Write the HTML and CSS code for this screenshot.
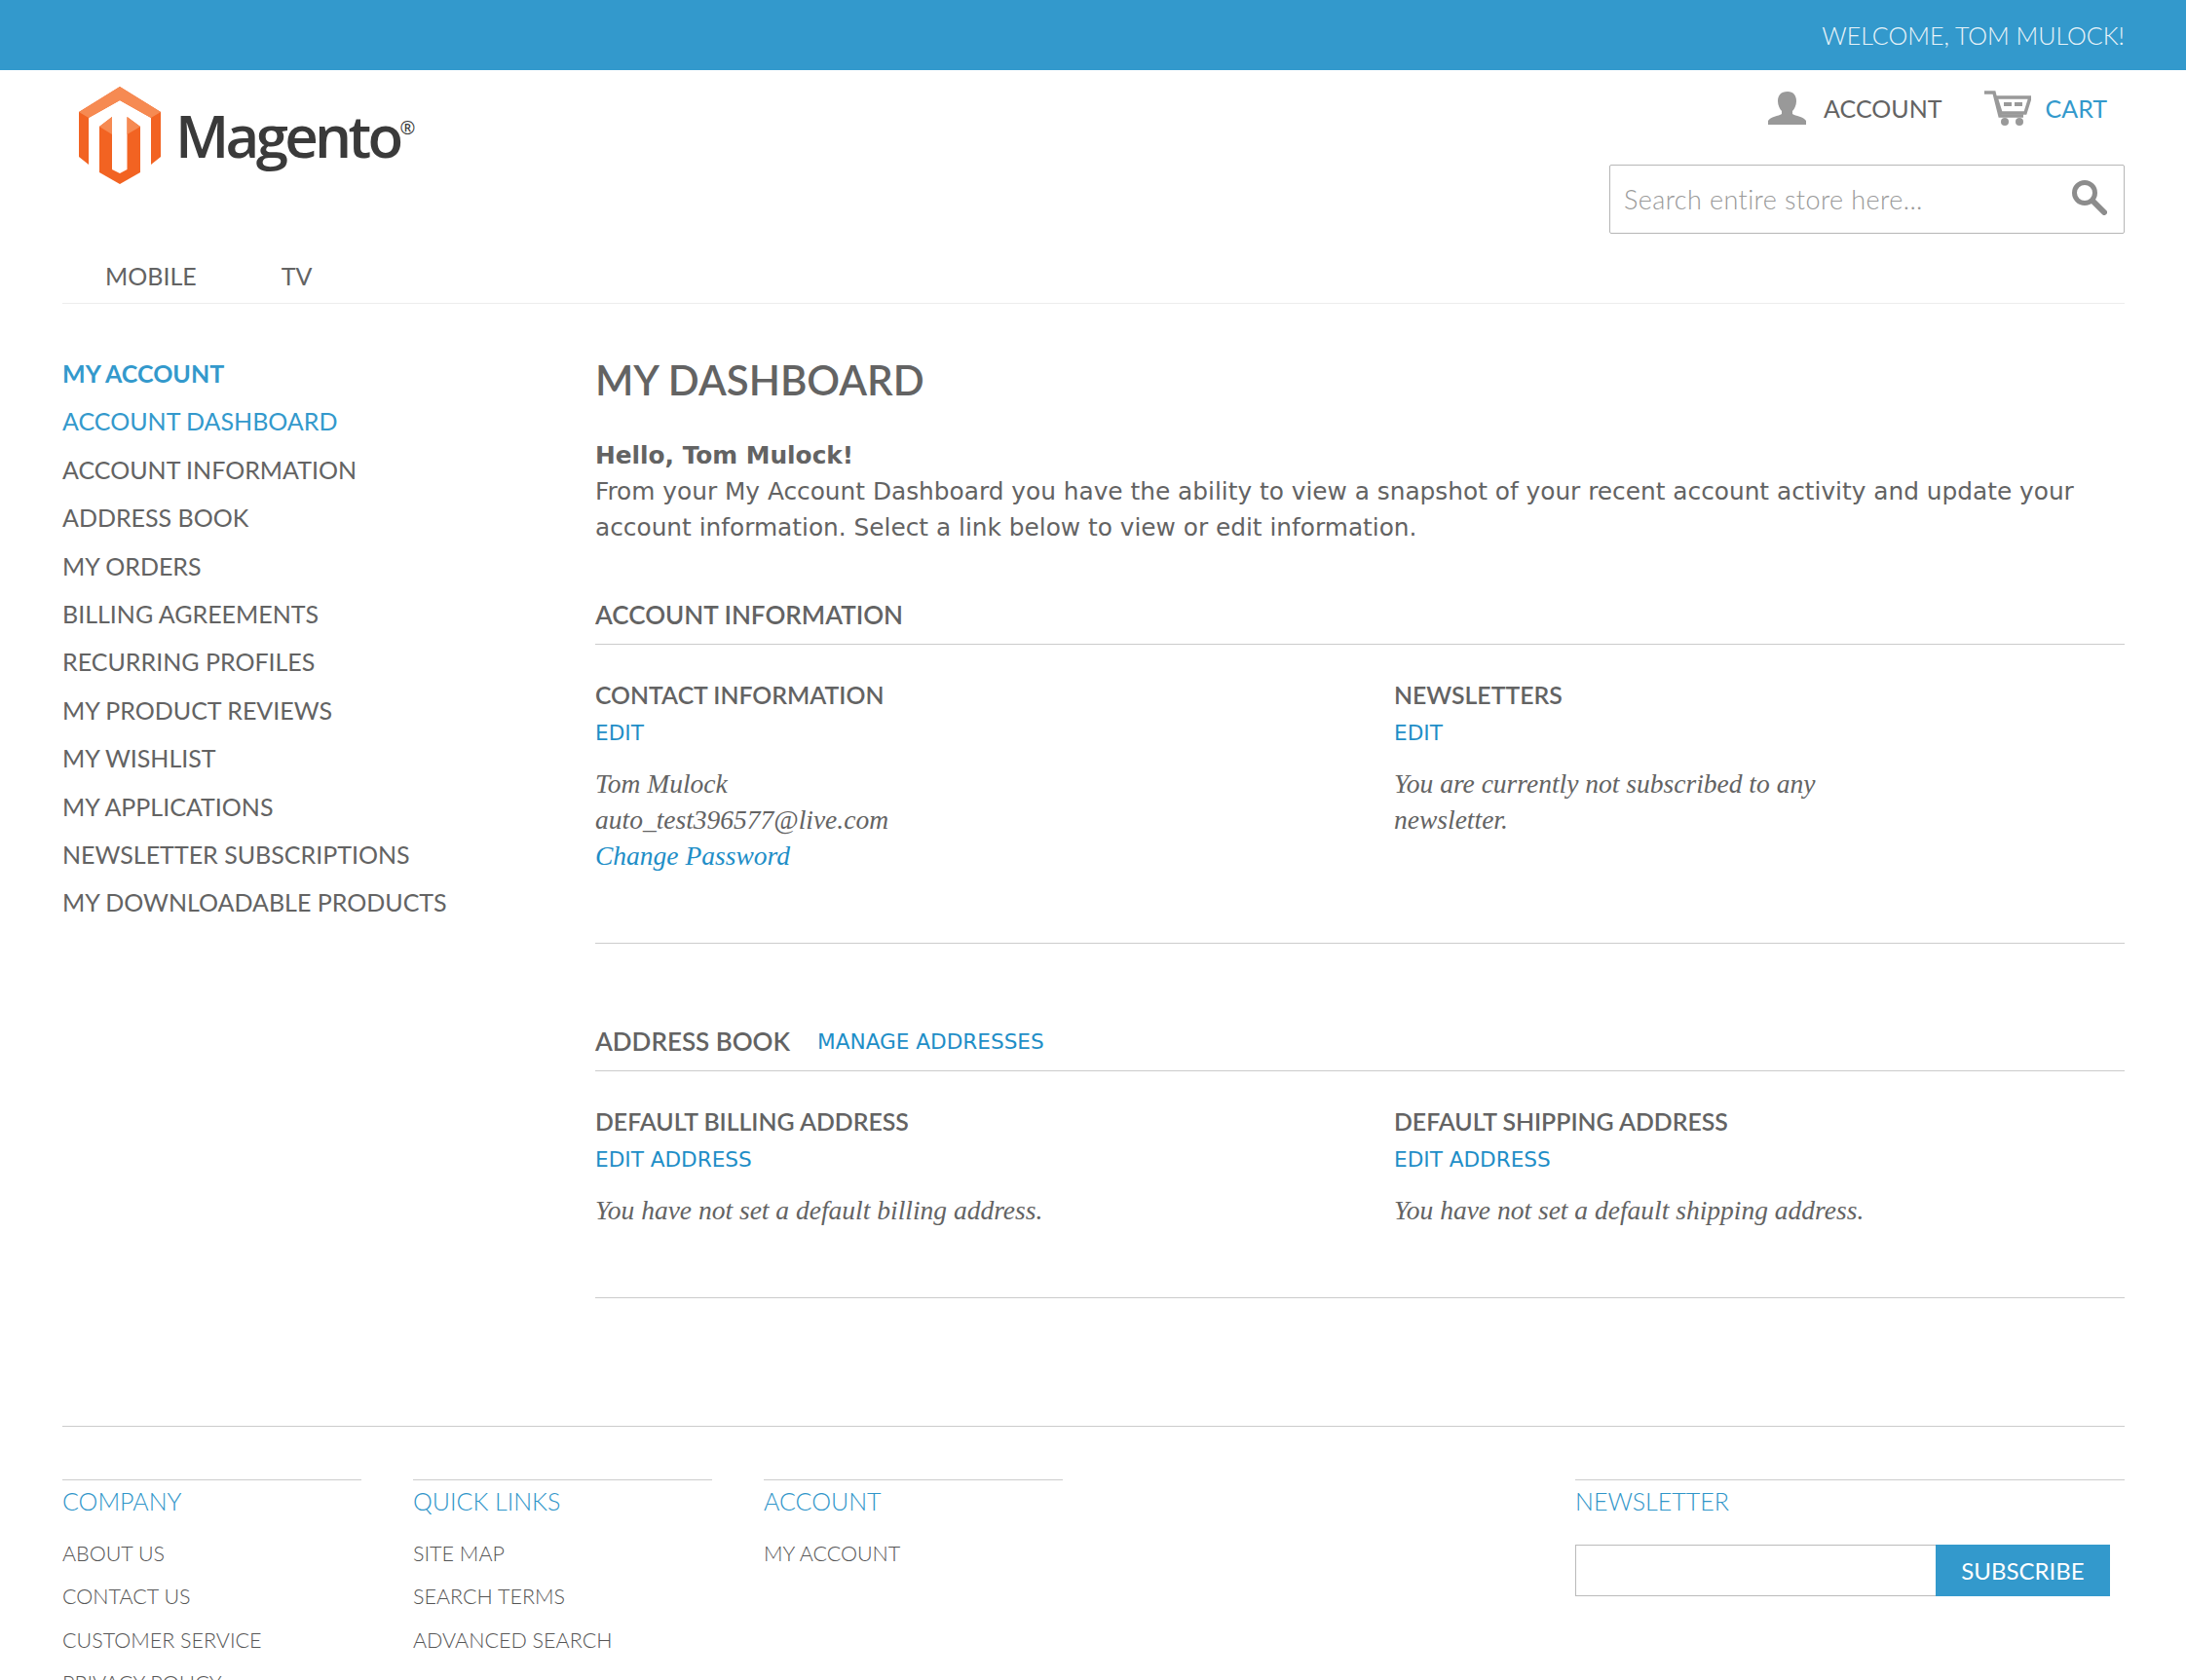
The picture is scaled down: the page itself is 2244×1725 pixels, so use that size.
FILE: index.html
```html
<!DOCTYPE html>
<html>
  <head>
    <title>My Dashboard</title>
    <link rel="stylesheet" href="styles.css">
  </head>
  <body>
    <div class="topbar">WELCOME, TOM MULOCK!</div>

    <div class="page">
      <header class="header">
        <div class="header-top">
          <a class="logo" href="#">
            <svg width="84" height="100" viewBox="0 0 84 100">
              <polygon points="42,0 84,26 84,72 74,80 74,32 42,14 10,32 10,80 0,72 0,26" fill="#f26322"/>
              <polygon points="42,0 84,26 74,32 42,14 10,32 0,26" fill="#f68a52"/>
              <polygon points="21,41 34,31 34,85 42,89 49.5,85 49.5,31 63,41 63,88 42,100 21,88" fill="#f26322"/>
              <polygon points="21,41 34,31 34,49" fill="#f68a52"/>
              <polygon points="63,41 49.5,31 49.5,49" fill="#f68a52"/>
            </svg>
            <span class="logo-text">Magento<sup>®</sup></span>
          </a>
          <div class="header-right">
            <div class="tools">
              <a class="tool" href="#">
                <svg width="40" height="34" viewBox="0 0 40 34">
                  <path d="M20 0c6 0 9 4 9 10 0 4-2 8-4 10v3c3 2 12 3 14 7v4H0v-4c2-4 11-5 14-7v-3c-2-2-4-6-4-10 0-6 3-10 10-10z" fill="#999"/>
                </svg>
                <span>ACCOUNT</span>
              </a>
              <a class="tool tool-cart" href="#">
                <svg width="49" height="36" viewBox="0 0 49 36">
                  <path d="M1 2h10l6 24h24" fill="none" stroke="#999" stroke-width="3.5"/>
                  <path d="M13 7h35l-5 16H18z" fill="none" stroke="#999" stroke-width="3.5"/>
                  <rect x="21" y="12" width="8" height="4" fill="#999"/>
                  <rect x="32" y="12" width="8" height="4" fill="#999"/>
                  <circle cx="22" cy="32" r="4" fill="#999"/>
                  <circle cx="37" cy="32" r="4" fill="#999"/>
                </svg>
                <span>CART</span>
              </a>
            </div>
            <form class="search">
              <input type="text" placeholder="Search entire store here...">
              <svg width="37" height="37" viewBox="0 0 37 37">
                <circle cx="14" cy="14" r="10.5" fill="none" stroke="#8c8c8c" stroke-width="5"/>
                <path d="M22 22l12 12" stroke="#8c8c8c" stroke-width="6" stroke-linecap="round"/>
              </svg>
            </form>
          </div>
        </div>
        <nav class="nav">
          <a href="#">MOBILE</a>
          <a href="#">TV</a>
        </nav>
      </header>

      <div class="layout">
        <aside class="sidebar">
          <h3>MY ACCOUNT</h3>
          <ul>
            <li class="active"><a href="#">ACCOUNT DASHBOARD</a></li>
            <li><a href="#">ACCOUNT INFORMATION</a></li>
            <li><a href="#">ADDRESS BOOK</a></li>
            <li><a href="#">MY ORDERS</a></li>
            <li><a href="#">BILLING AGREEMENTS</a></li>
            <li><a href="#">RECURRING PROFILES</a></li>
            <li><a href="#">MY PRODUCT REVIEWS</a></li>
            <li><a href="#">MY WISHLIST</a></li>
            <li><a href="#">MY APPLICATIONS</a></li>
            <li><a href="#">NEWSLETTER SUBSCRIPTIONS</a></li>
            <li><a href="#">MY DOWNLOADABLE PRODUCTS</a></li>
          </ul>
        </aside>

        <main class="main">
          <h1>MY DASHBOARD</h1>
          <div class="welcome">
            <strong>Hello, Tom Mulock!</strong><br>
            From your My Account Dashboard you have the ability to view a snapshot of your recent account activity and update your account information. Select a link below to view or edit information.
          </div>

          <section class="box box-account">
            <div class="box-title">
              <h2>ACCOUNT INFORMATION</h2>
            </div>
            <div class="box-cols">
              <div>
                <h4>CONTACT INFORMATION</h4>
                <a class="edit" href="#">EDIT</a>
                <p>Tom Mulock<br>auto_test396577@live.com<br><a href="#">Change Password</a></p>
              </div>
              <div>
                <h4>NEWSLETTERS</h4>
                <a class="edit" href="#">EDIT</a>
                <p class="narrow">You are currently not subscribed to any newsletter.</p>
              </div>
            </div>
          </section>

          <section class="box box-address">
            <div class="box-title">
              <h2>ADDRESS BOOK</h2>
              <a class="edit" href="#">MANAGE ADDRESSES</a>
            </div>
            <div class="box-cols">
              <div>
                <h4>DEFAULT BILLING ADDRESS</h4>
                <a class="edit" href="#">EDIT ADDRESS</a>
                <p>You have not set a default billing address.</p>
              </div>
              <div>
                <h4>DEFAULT SHIPPING ADDRESS</h4>
                <a class="edit" href="#">EDIT ADDRESS</a>
                <p>You have not set a default shipping address.</p>
              </div>
            </div>
          </section>
        </main>
      </div>

      <footer class="footer">
        <div class="footer-col">
          <h5>COMPANY</h5>
          <ul>
            <li><a href="#">ABOUT US</a></li>
            <li><a href="#">CONTACT US</a></li>
            <li><a href="#">CUSTOMER SERVICE</a></li>
            <li><a href="#">PRIVACY POLICY</a></li>
          </ul>
        </div>
        <div class="footer-col">
          <h5>QUICK LINKS</h5>
          <ul>
            <li><a href="#">SITE MAP</a></li>
            <li><a href="#">SEARCH TERMS</a></li>
            <li><a href="#">ADVANCED SEARCH</a></li>
          </ul>
        </div>
        <div class="footer-col">
          <h5>ACCOUNT</h5>
          <ul>
            <li><a href="#">MY ACCOUNT</a></li>
          </ul>
        </div>
        <div class="footer-col footer-news">
          <h5>NEWSLETTER</h5>
          <form class="subscribe">
            <input type="text">
            <button type="button">SUBSCRIBE</button>
          </form>
        </div>
      </footer>
    </div>
  </body>
</html>
```

FILE: styles.css
```css
html,
body {
  height: 1725px;
  overflow: hidden;
}

body {
  margin: 0;
  background-color: #fff;
  color: #636363;
  font-family: "Lato", sans-serif;
  font-size: 25px;
}

a {
  color: inherit;
  text-decoration: none;
}

ul {
  list-style: none;
  margin: 0;
  padding: 0;
}

.topbar {
  height: 72px;
  line-height: 72px;
  padding-right: 63px;
  background-color: #3399cc;
  color: #eaf4f9;
  font-weight: 300;
  text-align: right;
}

.page {
  padding: 0 63px 0 64px;
}

/* header */
.header-top {
  display: flex;
  justify-content: space-between;
  height: 183px;
}

.logo {
  display: flex;
  align-items: flex-start;
  gap: 15px;
  margin: 17px 0 0 17px;
  height: 100px;
}

.logo-text {
  margin-top: 10px;
  font-family: "Open Sans", sans-serif;
  font-size: 60px;
  font-weight: 600;
  line-height: 80px;
  letter-spacing: -3.7px;
  color: #3a3a3a;
}

.logo-text sup {
  font-size: 19px;
  font-weight: 400;
  line-height: 0;
  vertical-align: 24px;
  letter-spacing: 0;
}

.header-right {
  width: 529px;
}

.tools {
  display: flex;
  justify-content: flex-end;
  gap: 42px;
  height: 40px;
  margin-top: 19px;
  padding-right: 18px;
}

.tool {
  display: flex;
  align-items: center;
  gap: 17px;
}

.tool-cart {
  gap: 15px;
  color: #3399cc;
}

.search {
  display: flex;
  align-items: center;
  box-sizing: border-box;
  height: 71px;
  margin-top: 38px;
  padding: 0 17px 4px 14px;
  border: 1px solid #b6b6b6;
  border-radius: 2px;
}

.search input {
  flex: 1;
  min-width: 0;
  padding: 4px 0 0;
  border: 0;
  outline: 0;
  font-family: "Lato", sans-serif;
  font-size: 27px;
  font-weight: 300;
  letter-spacing: 0.4px;
}

.search input::placeholder {
  color: #999;
}

.nav {
  display: flex;
  gap: 87px;
  height: 56px;
  padding-left: 44px;
  line-height: 56px;
  border-bottom: 1px solid #ededed;
}

/* sidebar + main */
.layout {
  display: grid;
  grid-template-columns: 547px 1fr;
}

.sidebar {
  padding-top: 47px;
}

.sidebar h3 {
  margin: 0;
  line-height: 49.4px;
  font-size: 25px;
  font-weight: 700;
  color: #3399cc;
}

.sidebar li {
  line-height: 49.4px;
}

.sidebar li.active {
  color: #3399cc;
}

.main h1 {
  margin: 53px 0 0;
  line-height: 50px;
  font-size: 42px;
  font-weight: 600;
}

.welcome {
  margin-top: 34px;
  font-family: "DejaVu Sans", sans-serif;
  font-size: 24.8px;
  line-height: 37px;
}

.box-account {
  margin-top: 51px;
  padding-bottom: 71px;
  border-bottom: 1px solid #ccc;
}

.box-address {
  margin-top: 80px;
  padding-bottom: 71px;
  border-bottom: 1px solid #ccc;
}

.box-title {
  display: flex;
  align-items: center;
  gap: 28px;
  height: 40px;
  padding-bottom: 10px;
  border-bottom: 1px solid #ccc;
}

.box-title h2 {
  margin: 0;
  font-size: 26px;
  font-weight: 600;
}

.box-cols {
  display: grid;
  grid-template-columns: 820px 1fr;
  padding-top: 33px;
}

.box-cols h4 {
  margin: 0;
  line-height: 38px;
  font-size: 24.8px;
  font-weight: 600;
}

.box-cols .edit {
  display: block;
  line-height: 39px;
}

.edit {
  color: #1e8ec7;
  font-family: "DejaVu Sans", sans-serif;
  font-size: 21.6px;
}

.box-cols p {
  margin: 14px 0 0;
  font-family: "Liberation Serif", serif;
  font-size: 27.5px;
  font-style: italic;
  line-height: 37px;
}

.box-cols p a {
  color: #1e8ec7;
}

.box-cols p.narrow {
  max-width: 470px;
}

/* footer */
.footer {
  display: flex;
  gap: 53px;
  margin-top: 131px;
  padding-top: 54px;
  border-top: 1px solid #ccc;
}

.footer-col {
  width: 307px;
  border-top: 1px solid #ccc;
}

.footer-col h5 {
  margin: 0 0 11px;
  line-height: 42px;
  font-size: 25px;
  font-weight: 300;
  color: #2f95c9;
}

.footer-col li {
  line-height: 44.3px;
  font-size: 21.5px;
  font-weight: 300;
  color: #555;
}

.footer-news {
  width: 564px;
  margin-left: auto;
}

.footer-news h5 {
  margin-bottom: 24px;
}

.subscribe {
  display: flex;
}

.subscribe input {
  box-sizing: border-box;
  width: 370px;
  height: 53px;
  border: 1px solid #bbb;
  border-right: 0;
  outline: 0;
}

.subscribe button {
  width: 179px;
  height: 53px;
  padding: 0;
  border: 0;
  background-color: #3399cc;
  color: #fff;
  font-family: "Lato", sans-serif;
  font-size: 24px;
  cursor: pointer;
}
```
